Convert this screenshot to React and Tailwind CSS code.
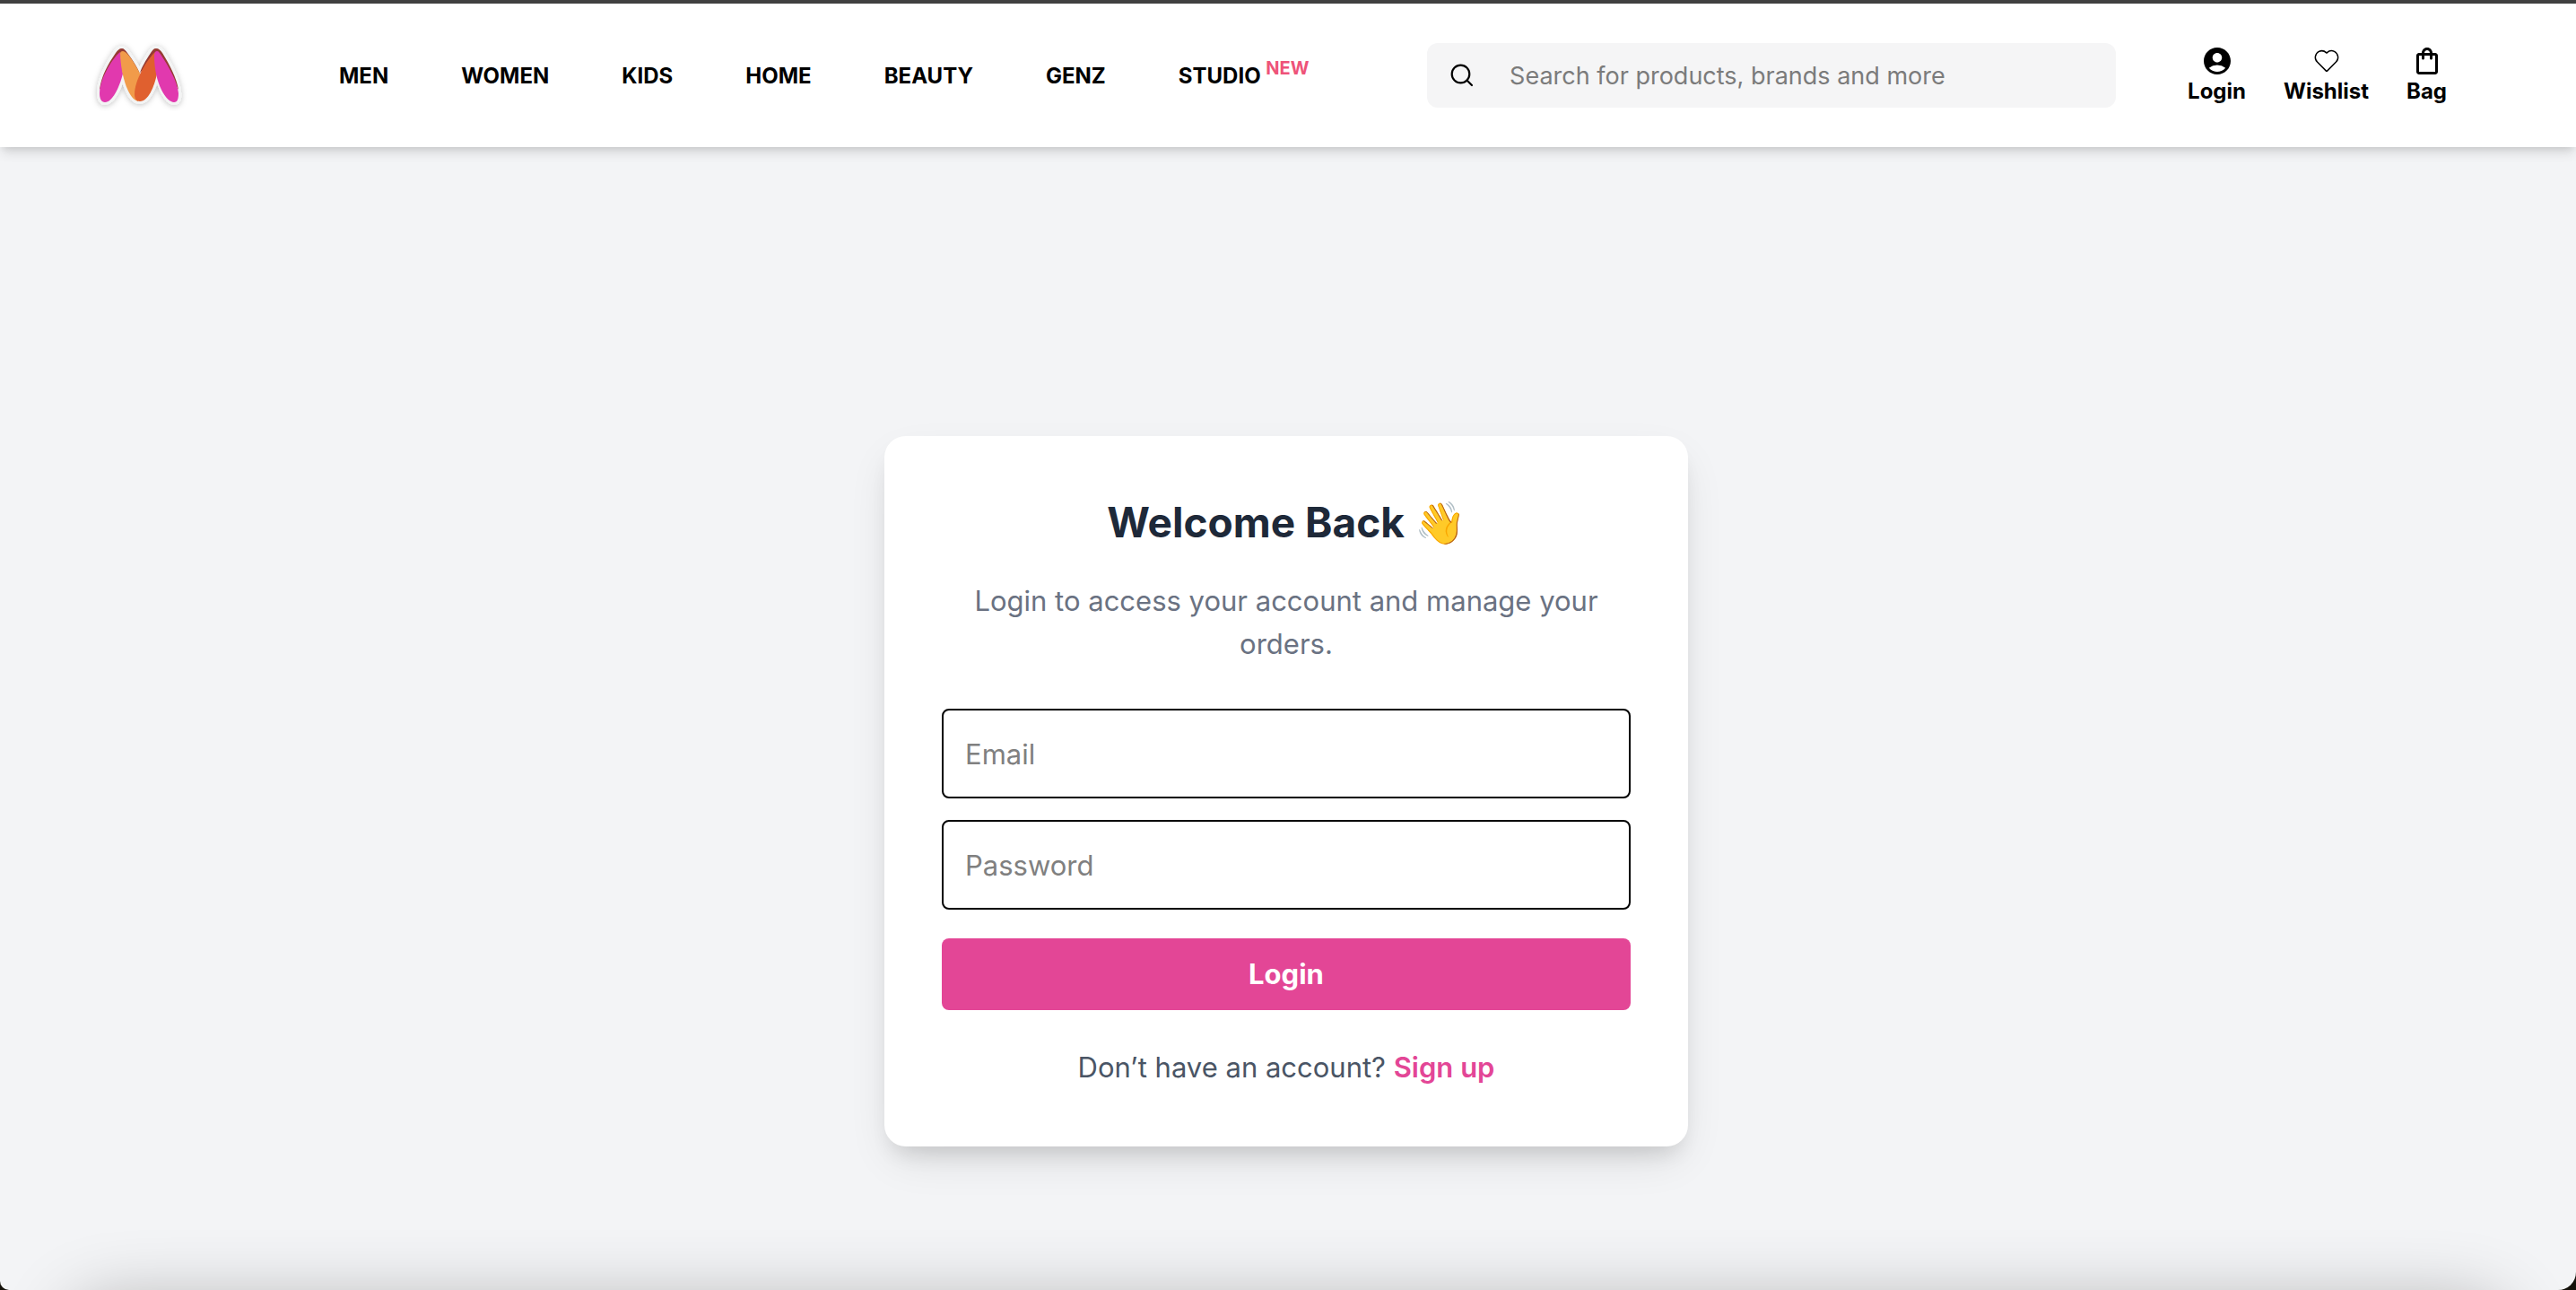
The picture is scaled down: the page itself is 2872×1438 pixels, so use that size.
import { MdAccountCircle, MdOutlineShoppingBag } from "react-icons/md";
import { CiHeart } from "react-icons/ci";

const links = ["MEN", "WOMEN", "KIDS", "HOME", "BEAUTY", "GENZ"];

const actions = [
  { label: "Login", Icon: MdAccountCircle },
  { label: "Wishlist", Icon: CiHeart },
  { label: "Bag", Icon: MdOutlineShoppingBag },
];

const fieldClass =
  "h-[100px] w-full rounded-lg border-2 border-black bg-white px-6 text-[31px] text-black placeholder-[#808080] outline-none";

function Logo() {
  return (
    <svg className="h-[80px] w-[110px]" viewBox="0 0 110 80" role="img" aria-label="Myntra">
      <defs>
        <filter id="logo-shadow" x="-20%" y="-20%" width="140%" height="140%">
          <feDropShadow dx="0" dy="1" stdDeviation="3" floodColor="#000" floodOpacity="0.25" />
        </filter>
      </defs>
      <g filter="url(#logo-shadow)" stroke="#f3f4f4" strokeWidth="6" strokeLinejoin="round" fill="none">
        <path
          fill="#f3f4f4"
          d="M36 10C33 10 31 12 29 15C20 28 11 45 11 60C11 66 13 70 17 70C25 70 33 54 37 38C40 52 46 69 56 69C65 69 72 53 75 38C79 54 86 70 94 70C98 70 100 66 99 59C98 45 89 28 81 15C79 12 77 10 74 10C71 10 70 12 68 15C62 24 58 31 56 37C52 30 48 23 42 15C40 12 38 10 36 10Z"
        />
      </g>
      <path d="M36 10C33 10 31 12 29 15C20 28 13 41 11 56L34 22L36 14L56 38C52 29 48 23 42 15C40 12 38 10 36 10Z" fill="#963b32" />
      <path d="M74 10C71 10 70 12 68 15C62 24 58 31 56 37L72 22L75 14L99 56C97 43 89 28 81 15C79 12 77 10 74 10Z" fill="#963b32" />
      <path d="M34 14C25 21 11 44 11 60C11 66 13 70 17 70C25 70 33 54 37 38Z" fill="#e139ae" />
      <path d="M37 13C42 13 51 28 56 38L54 69C44 67 35 43 34 16C34 14 35 13 37 13Z" fill="#f19b4a" />
      <path d="M73 14C63 23 50 46 50 61C50 66 52 69 56 69C65 69 72 53 75 38Z" fill="#e0602f" />
      <path d="M75 13C77 13 78 15 80 18C88 30 98 47 99 60C99 66 98 70 94 70C86 70 72 50 72 18C72 15 73 13 75 13Z" fill="#e139ae" />
    </svg>
  );
}

function SearchIcon() {
  return (
    <svg className="size-[26px]" viewBox="0 0 26 26" fill="none" stroke="#000" strokeWidth="2.200" strokeLinecap="round" aria-hidden="true">
      <circle cx="11.500" cy="11.500" r="9.800" />
      <path d="M18.500 18.500 24 24" />
    </svg>
  );
}

function Header() {
  return (
    <header className="relative z-10 flex h-[164px] items-center border-t-4 border-[#404040] bg-white pl-[100px] pr-36 shadow-[0_8px_12px_-2px_rgba(0,0,0,0.12),0_4px_8px_-4px_rgba(0,0,0,0.12)]">
      <a href="#home">
        <Logo />
      </a>
      <nav className="ml-[168px] flex shrink-0 items-center gap-[81px] pt-0.5 text-[24px] font-bold text-black">
        {links.map((name) => (
          <a key={name} href={"#" + name.toLowerCase()}>
            {name}
          </a>
        ))}
        <a href="#studio">
          STUDIO <sup className="text-[20px] text-[#ee5379]">NEW</sup>
        </a>
      </nav>
      <div className="ml-auto flex h-[72px] w-[768px] items-center rounded-xl bg-[#f5f5f6] pl-[26px]">
        <SearchIcon />
        <input
          type="search"
          aria-label="Search for products, brands and more"
          placeholder="Search for products, brands and more"
          className="ml-10 h-full flex-1 bg-transparent text-[27px] placeholder-[#7b7b7b] outline-none"
        />
      </div>
      <div className="ml-20 flex gap-[42px]">
        {actions.map(({ label, Icon }) => (
          <button key={label} type="button" className="flex flex-col items-center text-[24px] leading-8 font-bold text-black">
            <Icon className="size-9" />
            {label}
          </button>
        ))}
      </div>
    </header>
  );
}

function LoginCard() {
  return (
    <section className="w-full max-w-[896px] rounded-3xl bg-white p-16 text-center shadow-[0_20px_50px_-10px_rgba(0,0,0,0.12),0_16px_24px_-10px_rgba(0,0,0,0.12)]">
      <h1 className="text-[46px] leading-[64px] font-bold text-gray-800">Welcome Back 👋</h1>
      <p className="mt-8 text-[31px] leading-[48px] text-gray-500">Login to access your account and manage your orders.</p>
      <form className="mt-12 flex flex-col" onSubmit={(e) => e.preventDefault()}>
        <input type="email" aria-label="Email" placeholder="Email" className={fieldClass} />
        <input type="password" aria-label="Password" placeholder="Password" className={"mt-6 " + fieldClass} />
        <button type="submit" className="mt-8 h-20 rounded-lg bg-[#e34696] text-[31px] font-bold text-white">
          Login
        </button>
      </form>
      <p className="mt-10 text-[31px] leading-[48px] text-gray-600">
        Don’t have an account?{" "}
        <a href="#signup" className="font-semibold text-[#e34696]">
          Sign up
        </a>
      </p>
    </section>
  );
}

export default function App() {
  return (
    <div className="bg-[#14110a]">
      <div className="relative flex min-h-screen flex-col overflow-hidden rounded-br-[20px] rounded-bl-[10px] bg-[#f3f4f6] font-['Inter',sans-serif]">
        <Header />
        <main className="flex flex-1 justify-center pt-[322px] pr-1 pb-40">
          <LoginCard />
        </main>
        <div className="absolute inset-x-20 -bottom-44 h-40 rounded-[40px] shadow-[0_0_80px_rgba(0,0,0,0.3)]" />
      </div>
    </div>
  );
}
